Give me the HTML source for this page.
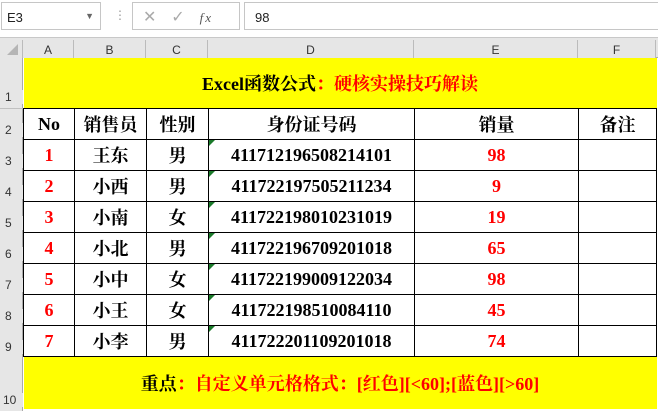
<!DOCTYPE html><html><head><meta charset="utf-8"><style>
body{margin:0;width:658px;height:411px;overflow:hidden;background:#fff;font-family:"Liberation Serif","Noto Serif CJK SC",serif;position:relative}
.a{position:absolute;box-sizing:border-box}
.hd{font-family:"Liberation Sans",sans-serif;font-size:12px;color:#333;background:#e6e6e6;text-align:center}
table{position:absolute;left:23px;top:58px;border-collapse:collapse;table-layout:fixed}
td{border:1px solid #000;text-align:center;font-weight:bold;font-size:18px;padding:0;height:30px;position:relative;white-space:nowrap}
.r{color:#f00}
.y td{background:#ff0;border:none}
.tri{position:absolute;left:0;top:0;width:0;height:0;border-top:6px solid #1a7a2a;border-right:6px solid transparent}
</style></head><body>
<div class="a" style="left:0;top:0;width:658px;height:36px;background:#fff"></div>
<div class="a" style="left:1px;top:2px;width:100px;height:28px;border:1px solid #c6c6c6;font:13px 'Liberation Sans',sans-serif;padding:7px 5px;color:#222">E3<span style="position:absolute;right:6px;top:8px;font-size:9px;color:#666">▼</span></div>
<div class="a" style="left:114px;top:8px;color:#999;font-size:12px">⋮</div>
<div class="a" style="left:132px;top:2px;width:108px;height:28px;border:1px solid #c6c6c6;color:#aaa;font:16px 'Liberation Sans',sans-serif;padding:4px 10px;letter-spacing:2px">✕&nbsp;&nbsp;✓&nbsp;&nbsp;<i style="font-family:'Liberation Serif';color:#555;font-size:13px">fx</i></div>
<div class="a" style="left:244px;top:2px;width:416px;height:28px;border:1px solid #c6c6c6;font:13px 'Liberation Sans',sans-serif;padding:7px 10px;color:#222">98</div>
<div class="a" style="left:0;top:37px;width:658px;height:1px;background:#c8c8c8"></div>
<div class="a hd" style="left:0;top:38px;width:658px;height:20px;border-bottom:1px solid #aaa"></div>
<div class="a hd" style="left:0;top:40px;width:23px;height:18px;border-right:1px solid #bbb"><div style="position:absolute;right:4px;bottom:3px;border-left:11px solid transparent;border-bottom:11px solid #b5b5b5"></div></div>
<div class="a hd" style="left:23px;top:40px;width:51px;height:18px;line-height:20px;border-right:1px solid #bbb">A</div>
<div class="a hd" style="left:74px;top:40px;width:72px;height:18px;line-height:20px;border-right:1px solid #bbb">B</div>
<div class="a hd" style="left:146px;top:40px;width:62px;height:18px;line-height:20px;border-right:1px solid #bbb">C</div>
<div class="a hd" style="left:208px;top:40px;width:206px;height:18px;line-height:20px;border-right:1px solid #bbb">D</div>
<div class="a hd" style="left:414px;top:40px;width:164px;height:18px;line-height:20px;border-right:1px solid #bbb">E</div>
<div class="a hd" style="left:578px;top:40px;width:78px;height:18px;line-height:20px;border-right:1px solid #bbb">F</div>
<div class="a hd" style="left:0;top:58px;width:23px;height:353px;border-right:1px solid #aaa"></div>
<div class="a hd" style="left:0;top:90px;width:23px;text-align:left;padding-left:5px">1</div>
<div class="a hd" style="left:0;top:123px;width:23px;text-align:left;padding-left:5px">2</div>
<div class="a hd" style="left:0;top:154px;width:23px;text-align:left;padding-left:5px">3</div>
<div class="a hd" style="left:0;top:185px;width:23px;text-align:left;padding-left:5px">4</div>
<div class="a hd" style="left:0;top:216px;width:23px;text-align:left;padding-left:5px">5</div>
<div class="a hd" style="left:0;top:247px;width:23px;text-align:left;padding-left:5px">6</div>
<div class="a hd" style="left:0;top:278px;width:23px;text-align:left;padding-left:5px">7</div>
<div class="a hd" style="left:0;top:309px;width:23px;text-align:left;padding-left:5px">8</div>
<div class="a hd" style="left:0;top:340px;width:23px;text-align:left;padding-left:5px">9</div>
<div class="a hd" style="left:0;top:393px;width:23px;text-align:left;padding-left:3px">10</div>
<div class="a" style="left:0;top:108px;width:23px;height:1px;background:#c0c0c0"></div>
<table>
<col style="width:51px"><col style="width:72px"><col style="width:62px"><col style="width:206px"><col style="width:164px"><col style="width:78px">
<tr class="y"><td colspan="6" style="height:50px">Excel函数公式<span class="r">：硬核实操技巧解读</span></td></tr>
<tr><td>No</td><td>销售员</td><td>性别</td><td>身份证号码</td><td>销量</td><td>备注</td></tr>
<tr><td class="r">1</td><td>王东</td><td>男</td><td><i class="tri"></i>411712196508214101</td><td class="r">98</td><td></td></tr>
<tr><td class="r">2</td><td>小西</td><td>男</td><td><i class="tri"></i>411722197505211234</td><td class="r">9</td><td></td></tr>
<tr><td class="r">3</td><td>小南</td><td>女</td><td><i class="tri"></i>411722198010231019</td><td class="r">19</td><td></td></tr>
<tr><td class="r">4</td><td>小北</td><td>男</td><td><i class="tri"></i>411722196709201018</td><td class="r">65</td><td></td></tr>
<tr><td class="r">5</td><td>小中</td><td>女</td><td><i class="tri"></i>411722199009122034</td><td class="r">98</td><td></td></tr>
<tr><td class="r">6</td><td>小王</td><td>女</td><td><i class="tri"></i>411722198510084110</td><td class="r">45</td><td></td></tr>
<tr><td class="r">7</td><td>小李</td><td>男</td><td><i class="tri"></i>411722201109201018</td><td class="r">74</td><td></td></tr>
<tr class="y"><td colspan="6" style="height:52px">重点<span class="r">：自定义单元格格式：[红色][&lt;60];[蓝色][&gt;60]</span></td></tr>
</table>
</body></html>
